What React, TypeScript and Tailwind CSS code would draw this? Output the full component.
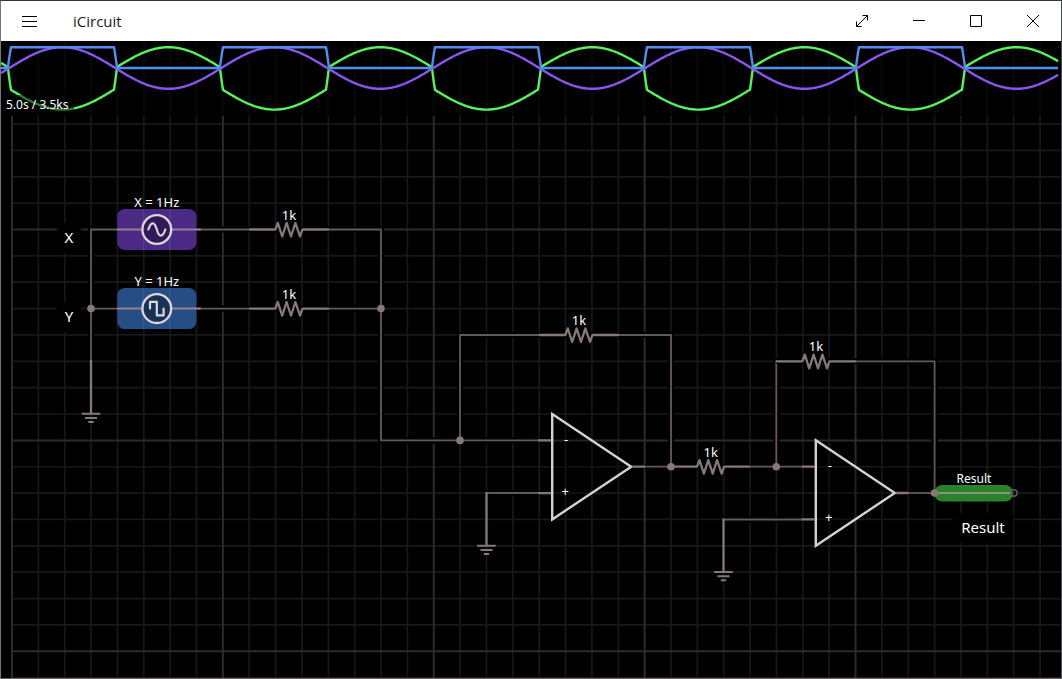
import React from "react";

const UNIT = 26.36;
const gx = (i: number) => 12 + UNIT * i;
const gy = (j: number) => 229.5 + UNIT * j;
const range = (a: number, b: number) => Array.from({ length: b - a + 1 }, (_, k) => a + k);

const WIRE = "#655a5b";
const LEAD = "#857878";

const PERIOD = 212;
const PHASE = 8.3;
const sine = (x: number) => Math.sin(((x - PHASE) / PERIOD) * 2 * Math.PI);
const square = (x: number) => {
  const p = (((x - PHASE + 1.5) % PERIOD) + PERIOD) % PERIOD;
  if (p < 3) return p / 3;
  if (p < 106.3) return 1;
  if (p < 109.3) return 1 - (p - 106.3) / 3;
  return 0;
};

function trace(fn: (x: number) => number) {
  return range(0, 1057)
    .map((x) => `${x},${(27 - 20.8 * fn(x)).toFixed(1)}`)
    .join(" ");
}

function Scope() {
  return (
    <section aria-label="Scope" className="relative h-[74px] shrink-0 overflow-hidden bg-black">
      <svg className="block h-full w-full" fill="none" strokeWidth="2.4" strokeLinejoin="round">
        <g stroke="#070707">
          {range(0, 80).map((i) => (
            <line key={i} x1={gx(i) - 1} x2={gx(i) - 1} y1="0" y2="74" />
          ))}
        </g>
        <polyline points={trace((x) => -(sine(x) + square(x)))} stroke="#5af25a" />
        <polyline points={trace(sine)} stroke="#8a55f0" />
        <polyline points={trace(square)} stroke="#528ef0" />
      </svg>
      <p className="absolute bottom-0 left-0 bg-black/50 px-[5px] text-xs leading-5 text-white">5.0s / 3.5ks</p>
    </section>
  );
}

function Wire({ d, w = 1.8, color = WIRE }: { d: string; w?: number; color?: string }) {
  return (
    <g fill="none">
      <path d={d} stroke="#000" strokeWidth="6" />
      <path d={d} stroke={color} strokeWidth={w} />
    </g>
  );
}

function Resistor({ x, y }: { x: number; y: number }) {
  return (
    <g transform={`translate(${x} ${y})`} fill="none" strokeLinejoin="round">
      <path d="M-40 0H40" stroke="#000" strokeWidth="5" />
      <path
        d="M-40 0H-13.6L-11.2 -6.6L-6.8 7L-2.4 -6.6L2 7L6.4 -6.6L11 7L13.4 0H40"
        stroke={LEAD}
        strokeWidth="2.3"
      />
      <text y="-10" textAnchor="middle" fontSize="13" fill="#fff">1k</text>
    </g>
  );
}

function Ground({ x, y, bottom }: { x: number; y: number; bottom: number }) {
  return (
    <g stroke={LEAD} strokeWidth="2">
      <path d={`M${x} ${y}V${bottom}`} strokeWidth="2.3" />
      <path d={`M${x - 9.3} ${bottom}h18.6M${x - 6} ${bottom + 4.2}h12M${x - 2.7} ${bottom + 8.2}h5.4`} />
    </g>
  );
}

function OpAmp({ x, y }: { x: number; y: number }) {
  return (
    <g transform={`translate(${x} ${y})`}>
      <path d="M0 -52.7V52.7L79 0Z" fill="#000" fillOpacity="0.2" stroke="#d6d2d3" strokeWidth="2.4" />
      <path d={`M-14 ${-UNIT}H-1M-14 ${UNIT}H-1M80 0H93`} stroke={LEAD} strokeWidth="2.3" />
      <text x="14" y="-23" textAnchor="middle" fontSize="13" fill="#fff">-</text>
      <text x="13" y="29" textAnchor="middle" fontSize="13" fill="#fff">+</text>
    </g>
  );
}

function Source({ y, fill, wave, label }: { y: number; fill: string; wave: string; label: string }) {
  return (
    <g transform={`translate(156.8 ${y})`} fill="none">
      <rect x="-39.6" y="-20.5" width="79.2" height="41" rx="7.5" fill={fill} />
      <path d="M-13.4 -20.5V20.5M13 -20.5V20.5" stroke="#fff" strokeOpacity="0.07" strokeWidth="1.6" />
      <path d="M-40 0H-15M15 0H44" stroke="#98808c" strokeWidth="2" />
      <circle r="14.4" fill="#000" fillOpacity="0.35" stroke="#ded6de" strokeWidth="2.3" />
      <path d={wave} stroke="#ded6de" strokeWidth="2.2" strokeLinejoin="round" strokeLinecap="round" />
      <text y="-23" textAnchor="middle" fontSize="13" fill="#fff">{label}</text>
    </g>
  );
}

function Caption({ x, y, w, size, children }: { x: number; y: number; w: number; size: number; children: string }) {
  return (
    <g>
      <rect x={x - w / 2} y={y - 20} width={w} height="30" fill="#000" filter="url(#soft)" />
      <text x={x} y={y} textAnchor="middle" fontSize={size} fill="#fff">{children}</text>
    </g>
  );
}

function Circuit() {
  return (
    <section aria-label="Circuit" className="relative min-h-[563px] grow overflow-hidden bg-black">
      <svg className="absolute inset-0 h-full w-full" role="img" aria-label="Summing amplifier circuit">
        <defs>
          <filter id="soft" x="-20%" y="-20%" width="140%" height="140%">
            <feGaussianBlur stdDeviation="1" />
          </filter>
        </defs>
        <g transform="translate(-1 -115)">
          <g strokeWidth="1.7" stroke="#181818">
            {range(0, 80).filter((i) => i % 8).map((i) => (
              <line key={`v${i}`} x1={gx(i)} x2={gx(i)} y1="116" y2="2000" />
            ))}
            {range(-4, 60).filter((j) => j % 8).map((j) => (
              <line key={`h${j}`} x1="11" x2="4000" y1={gy(j)} y2={gy(j)} />
            ))}
          </g>
          <g strokeWidth="2" stroke="#2b2b2b">
            {range(0, 10).map((i) => (
              <line key={`v${i}`} x1={gx(i * 8)} x2={gx(i * 8)} y1="116" y2="2000" />
            ))}
            {range(0, 8).map((j) => (
              <line key={`h${j}`} x1="11" x2="4000" y1={gy(j * 8)} y2={gy(j * 8)} />
            ))}
          </g>

          <Wire d="M91 360V229.5H381V440.4H539" />
          <Wire d="M91 308.6H381" />
          <Wire d="M460 440.4V335H671V466.7" />
          <Wire d="M486.5 493H539" />
          <Wire d="M645 466.7H802" />
          <Wire d="M776.3 466.7V361.3H934.6V493" />
          <Wire d="M723.5 519.5H802" />
          <Wire d="M908 493H935" />

          <Ground x={91} y={360} bottom={413.8} />
          <Ground x={486.5} y={492} bottom={545.7} />
          <Ground x={723.5} y={518.5} bottom={572} />

          <Source y={229.5} fill="#4b2a86" label="X = 1Hz"
            wave="M-8.5 0C-6 -7.5 -2.5 -9 0 0C2.5 9 6 7.5 8.5 0" />
          <Source y={308.6} fill="#264e84" label="Y = 1Hz"
            wave="M-6.8 0V-6.8H0V6.8H6.8V0" />

          <Resistor x={289} y={229.5} />
          <Resistor x={289} y={308.6} />
          <Resistor x={579} y={335} />
          <Resistor x={710.7} y={466.7} />
          <Resistor x={816} y={361.3} />

          <OpAmp x={552.2} y={466.7} />
          <OpAmp x={815.8} y={493} />

          <rect x="934.5" y="485" width="78.5" height="16.5" rx="8" fill="#2b822a" />
          <path d="M935 493H1011" stroke="#859682" strokeWidth="2" />
          <circle cx="1014" cy="493" r="3.2" fill="none" stroke="#655a5b" strokeWidth="1.5" />
          <text x="974" y="483" textAnchor="middle" fontSize="12" fill="#fff">Result</text>

          <g fill="#857878">
            <circle cx="91" cy="308.6" r="3.8" />
            <circle cx="381" cy="308.6" r="3.8" />
            <circle cx="460" cy="440.4" r="3.8" />
            <circle cx="671" cy="466.7" r="3.8" />
            <circle cx="776.3" cy="466.7" r="3.8" />
            <circle cx="934.6" cy="493" r="3.8" />
          </g>

          <Caption x={69} y={243} w={24} size={15}>X</Caption>
          <Caption x={69} y={322} w={24} size={15}>Y</Caption>
          <Caption x={983} y={533} w={60} size={15}>Result</Caption>
        </g>
      </svg>
    </section>
  );
}

function WindowButton({ label, d }: { label: string; d: string }) {
  return (
    <button type="button" aria-label={label} className="flex h-10 w-[57px] items-center justify-center hover:bg-gray-200">
      <svg width="14" height="14" viewBox="0 0 14 14" fill="none" stroke="#000">
        <path d={d} />
      </svg>
    </button>
  );
}

export default function App() {
  return (
    <div className="flex min-h-screen flex-col border border-t-[#33353a] border-r-[#4a5052] border-b-[#6b6768] border-l-[#77777a] bg-black font-['Noto_Sans','Open_Sans',sans-serif]">
      <header className="flex h-10 shrink-0 items-center bg-white text-[#1a1a1a]">
        <button type="button" aria-label="Menu" className="flex h-10 w-[57px] items-center justify-center hover:bg-gray-200">
          <svg width="15" height="11" viewBox="0 0 15 11" stroke="#000">
            <path d="M0 .5H15M0 5.5H15M0 10.5H15" />
          </svg>
        </button>
        <h1 className="grow pl-[15px] font-['Open_Sans','Noto_Sans',sans-serif] text-[15px] leading-5">iCircuit</h1>
        <WindowButton label="Full screen" d="M7.5 1.5H12.5V6.5M12.5 1.5L1.5 12.5M1.5 7.5V12.5H6.5" />
        <WindowButton label="Minimize" d="M1 6.5H13" />
        <WindowButton label="Maximize" d="M1.5 1.5H12.5V12.5H1.5Z" />
        <WindowButton label="Close" d="M1 1L13 13M13 1L1 13" />
      </header>
      <main className="flex grow flex-col">
        <Scope />
        <Circuit />
      </main>
    </div>
  );
}
